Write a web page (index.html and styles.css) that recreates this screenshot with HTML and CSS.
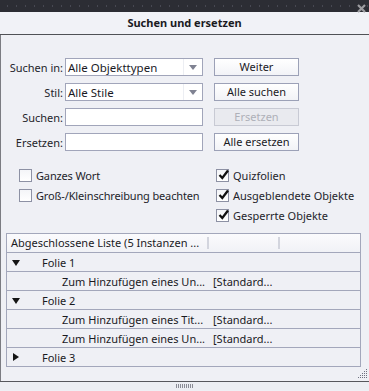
FILE: index.html
```html
<!DOCTYPE html>
<html lang="de">
	<head>
		<meta charset="UTF-8">
		<title>Suchen und ersetzen</title>
		<link rel="stylesheet" href="styles.css">
	</head>
	<body>
		<div class="titleBar"> <!-- dark drag bar -->
			<svg class="closeIcon" width="9" height="9" viewBox="0 0 9 9">
				<path d="M1 1 L8 8 M8 1 L1 8" stroke="#9c9ca0" stroke-width="2.2"/>
			</svg>
		</div>
		<div class="heading">Suchen und ersetzen</div>

		<div class="panelBody">
			<div class="searchForm">
				<span class="fieldLabel">Suchen in:</span>
				<div class="dropDown">Alle Objekttypen<span class="dropArrow"></span></div>
				<div class="btn">Weiter</div>

				<span class="fieldLabel">Stil:</span>
				<div class="dropDown">Alle Stile<span class="dropArrow"></span></div>
				<div class="btn">Alle suchen</div>

				<span class="fieldLabel">Suchen:</span>
				<div class="textField"></div>
				<div class="btn disabled">Ersetzen</div>

				<span class="fieldLabel">Ersetzen:</span>
				<div class="textField"></div>
				<div class="btn">Alle ersetzen</div>
			</div>

			<div class="options">
				<div class="optionCol leftCol">
					<div class="option"><span class="checkBox"></span>Ganzes Wort</div>
					<div class="option"><span class="checkBox"></span>Groß-/Kleinschreibung beachten</div>
				</div>
				<div class="optionCol">
					<div class="option"><span class="checkBox checked"></span>Quizfolien</div>
					<div class="option"><span class="checkBox checked"></span>Ausgeblendete Objekte</div>
					<div class="option"><span class="checkBox checked"></span>Gesperrte Objekte</div>
				</div>
			</div>

			<div class="resultList">
				<div class="listHeader">
					<span class="headCell first">Abgeschlossene Liste (5 Instanzen ...</span>
					<span class="headCell second"></span>
					<span class="headCell"></span>
				</div>
				<div class="listRow"><span class="twisty"><span class="arrowDown"></span></span>Folie 1</div>
				<div class="listRow child"><span class="itemName">Zum Hinzufügen eines Un...</span><span>[Standard...</span></div>
				<div class="listRow"><span class="twisty"><span class="arrowDown"></span></span>Folie 2</div>
				<div class="listRow child"><span class="itemName">Zum Hinzufügen eines Tit...</span><span>[Standard...</span></div>
				<div class="listRow child"><span class="itemName">Zum Hinzufügen eines Un...</span><span>[Standard...</span></div>
				<div class="listRow"><span class="twisty"><span class="arrowRight"></span></span>Folie 3</div>
			</div>

			<div class="gripRow">
				<svg width="10" height="10" viewBox="0 0 10 10" fill="#6e7180">
					<rect x="8" y="0" width="1" height="1"/>
					<rect x="6" y="2" width="1" height="1"/><rect x="8" y="2" width="1" height="1"/>
					<rect x="4" y="4" width="1" height="1"/><rect x="6" y="4" width="1" height="1"/><rect x="8" y="4" width="1" height="1"/>
					<rect x="2" y="6" width="1" height="1"/><rect x="4" y="6" width="1" height="1"/><rect x="6" y="6" width="1" height="1"/><rect x="8" y="6" width="1" height="1"/>
					<rect x="0" y="8" width="1" height="1"/><rect x="2" y="8" width="1" height="1"/><rect x="4" y="8" width="1" height="1"/><rect x="6" y="8" width="1" height="1"/><rect x="8" y="8" width="1" height="1"/>
				</svg>
			</div>
		</div>

		<div class="footer"><span class="handle"></span></div>
	</body>
</html>
```

FILE: styles.css
```css
html
{
	margin: 0;
	padding: 0;
	background: #eff0f5;
}

body
{
	margin: 0;
	padding: 0;
	width: 369px;
	height: 391px;
	overflow: hidden;
	background: #eff0f5;
	font-family: "Noto Sans", "Open Sans", sans-serif;
	font-size: 11px;
	color: #1a1a1f;
}

.titleBar
{
	height: 12px;
	display: flex;
	justify-content: flex-end;
	align-items: center;
	padding-right: 3px;
	background-color: #2c2d34;
	background-image: radial-gradient(circle, #474852 0.8px, transparent 1px);
	background-size: 9px 12px;
	background-position: 3px 0;
}

.closeIcon
{
	display: block;
	margin-top: 4px;
}

.heading
{
	height: 22px;
	line-height: 22px;
	text-align: center;
	font-weight: bold;
	background: #f1f2f7;
	border-bottom: 1px solid #505156;
}

.panelBody
{
	border-left: 1px solid #7b7c82;
	height: 346px;
	display: flex;
	flex-direction: column;
}

.searchForm
{
	display: grid;
	grid-template-columns: 62px 140px 96px;
	grid-auto-rows: 18px;
	row-gap: 7px;
	margin-top: 23px;
	align-items: center;
}

.fieldLabel
{
	text-align: right;
	color: #24242a;
}

.dropDown, .textField
{
	box-sizing: border-box;
	height: 18px;
	width: 138px;
	margin-left: 2px;
	background: #ffffff;
	border: 1px solid #a1a5ba;
}

.dropDown
{
	display: flex;
	align-items: center;
	padding-left: 2px;
	font-size: 11.5px;
}

.dropArrow
{
	margin-left: auto;
	width: 18px;
	height: 16px;
	border-left: 1px solid #eceef3;
	display: flex;
	align-items: center;
	justify-content: center;
}

.dropArrow::after
{
	content: "";
	border-left: 4px solid transparent;
	border-right: 4px solid transparent;
	border-top: 5px solid #7f8292;
}

.btn
{
	box-sizing: border-box;
	height: 18px;
	width: 85px;
	margin-left: 11px;
	border: 1px solid #9ca1b7;
	background: linear-gradient(#ffffff, #f2f3f7);
	text-align: center;
	line-height: 16px;
}

.btn.disabled
{
	border-color: #c8cad4;
	background: #e9eaef;
	color: #aeb0b8;
}

.options
{
	display: flex;
	margin-top: 14px;
	padding-left: 18px;
}

.optionCol
{
	display: flex;
	flex-direction: column;
}

.leftCol
{
	width: 197px;
	letter-spacing: -0.15px;
}

.option
{
	height: 20px;
	display: flex;
	align-items: center;
	color: #24242a;
}

.checkBox
{
	box-sizing: border-box;
	width: 13px;
	height: 13px;
	margin-right: 4px;
	border: 1px solid #8d91a4;
	background: linear-gradient(#f4f5f8, #ffffff);
	display: flex;
	align-items: center;
	justify-content: center;
}

.checkBox.checked::after
{
	content: "";
	width: 11px;
	height: 11px;
	margin: -2px -2px 0 0;
	background: url("data:image/svg+xml,%3Csvg xmlns='http://www.w3.org/2000/svg' width='11' height='11' viewBox='0 0 11 11'%3E%3Cpath d='M1.5 6 L4.3 9 L10 1.5' fill='none' stroke='%23111' stroke-width='2.3'/%3E%3C/svg%3E") no-repeat;
}

.resultList
{
	margin-top: 8px;
	margin-left: 5px;
	width: 355px;
	box-sizing: border-box;
	border: 1px solid #a3a7bb;
	border-bottom: none;
}

.listHeader
{
	height: 18px;
	display: flex;
	align-items: center;
	border-bottom: 1px solid #a3a7bb;
	background: linear-gradient(#fbfbfd, #f1f2f6);
}

.headCell
{
	height: 12px;
	line-height: 12px;
	border-right: 2px solid #d3d5de;
}

.headCell.first
{
	width: 196px;
	padding-left: 4px;
}

.headCell.second
{
	width: 69px;
}

.headCell:last-child
{
	border-right: none;
}

.listRow
{
	height: 18px;
	display: flex;
	align-items: center;
	border-bottom: 1px solid #a3a7bb;
}

.twisty
{
	width: 35px;
	padding-left: 5px;
	box-sizing: border-box;
	display: flex;
	align-items: center;
}

.arrowDown
{
	border-left: 4px solid transparent;
	border-right: 4px solid transparent;
	border-top: 6px solid #151515;
	margin-top: 1px;
}

.arrowRight
{
	border-top: 4px solid transparent;
	border-bottom: 4px solid transparent;
	border-left: 6px solid #151515;
	margin-left: 1px;
}

.listRow.child
{
	padding-left: 55px;
}

.itemName
{
	width: 151px;
}

.gripRow
{
	flex: 1;
	display: flex;
	justify-content: flex-end;
	align-items: flex-end;
	padding: 0 1px 2px 0;
}

.footer
{
	height: 8px;
	border-top: 1px solid #56575c;
	background: #eceef3;
	display: flex;
	justify-content: center;
}

.handle
{
	margin-top: 2px;
	width: 18px;
	height: 4px;
	background: repeating-linear-gradient(90deg, #8a8c96 0 1px, transparent 1px 2px);
}
```
